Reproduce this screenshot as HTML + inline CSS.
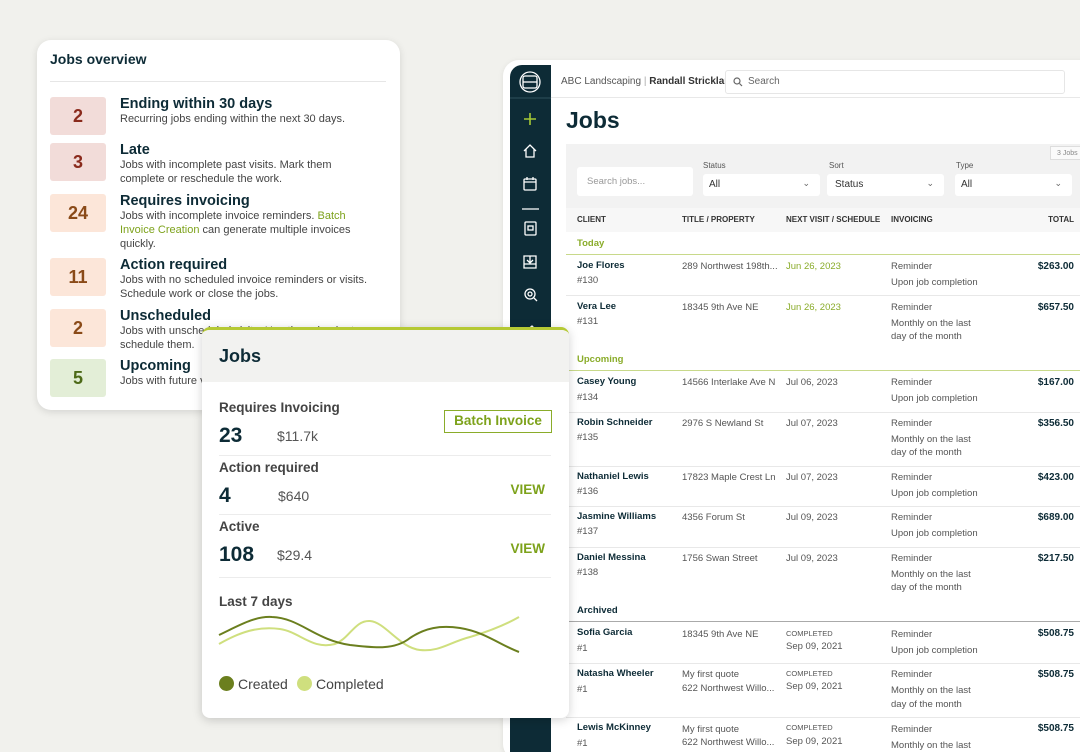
<!DOCTYPE html>
<html style="overflow:hidden;height:752px"><head><meta charset="utf-8"><style>
*{box-sizing:border-box;margin:0;padding:0}
html,body{overflow:hidden}
body{width:1080px;height:752px;background:#f1f1ed;font-family:"Liberation Sans",sans-serif;position:relative;overflow:hidden;color:#0d2b36}
.a{position:absolute;white-space:nowrap}
.card1{position:absolute;left:37px;top:40px;width:363px;height:370px;background:#fff;border-radius:14px;box-shadow:0 2px 8px rgba(0,0,0,.12)}
.badge{position:absolute;left:13px;width:56px;height:38px;border-radius:3px;font-weight:bold;font-size:18px;display:flex;align-items:center;justify-content:center}
.t1{position:absolute;left:83px;font-size:14.5px;font-weight:bold;color:#0d2b36}
.d1{position:absolute;left:83px;font-size:11px;line-height:14px;color:#444;width:258px}
.app{position:absolute;left:503px;top:60px;width:600px;height:700px;background:#fff;border-radius:16px;box-shadow:0 1px 6px rgba(0,0,0,.08)}
.side{position:absolute;left:510px;top:65px;width:41px;height:687px;background:#0d2b36;border-radius:12px 0 0 0}
.t{font-size:9.5px;color:#555}
.n{font-size:9.5px;font-weight:bold;color:#0d2b36}
.tot{position:absolute;right:6px;font-size:10px;font-weight:bold;color:#0d2b36}
.hl{position:absolute;left:566px;width:514px;height:1px;background:#e8e8e8}
.card2{position:absolute;left:202px;top:327px;width:367px;height:391px;background:#fff;border-radius:8px;box-shadow:0 2px 10px rgba(0,0,0,.18);overflow:hidden;border-top:3px solid #b5c934}
.lab{position:absolute;left:17px;font-size:13.5px;font-weight:bold;color:#444}
.big{position:absolute;left:17px;font-size:21px;font-weight:bold;color:#0d2b36}
.amt{position:absolute;font-size:14px;color:#555}
.view{position:absolute;right:24px;font-size:13.5px;font-weight:bold;color:#7da21b}
.sep{position:absolute;left:17px;width:332px;height:1px;background:#ececec}
</style></head><body>

<div class="card1">
  <div class="a" style="left:13px;top:11px;font-size:14px;font-weight:bold">Jobs overview</div>
  <div class="a" style="left:13px;top:41px;width:336px;height:1px;background:#e6e6e6"></div>
  <div class="badge" style="top:57px;background:#f2dcd9;color:#8a2a1c">2</div>
  <div class="t1" style="top:56px">Ending within 30 days</div>
  <div class="d1" style="top:72px;width:280px">Recurring jobs ending within the next 30 days.</div>
  <div class="badge" style="top:103px;background:#f2dcd9;color:#8a2a1c">3</div>
  <div class="t1" style="top:102px">Late</div>
  <div class="d1" style="top:118px;white-space:normal">Jobs with incomplete past visits. Mark them complete or reschedule the work.</div>
  <div class="badge" style="top:154px;background:#fce6d9;color:#8a4a18">24</div>
  <div class="t1" style="top:153px">Requires invoicing</div>
  <div class="d1" style="top:169px;white-space:normal;width:248px">Jobs with incomplete invoice reminders. <span style="color:#7da21b">Batch Invoice Creation</span> can generate multiple invoices quickly.</div>
  <div class="badge" style="top:218px;background:#fce6d9;color:#8a4a18">11</div>
  <div class="t1" style="top:217px">Action required</div>
  <div class="d1" style="top:233px;width:280px;white-space:normal">Jobs with no scheduled invoice reminders or visits. Schedule work or close the jobs.</div>
  <div class="badge" style="top:269px;background:#fce6d9;color:#8a4a18">2</div>
  <div class="t1" style="top:268px">Unscheduled</div>
  <div class="d1" style="top:284px;white-space:normal">Jobs with unscheduled visits. Use the calendar to schedule them.</div>
  <div class="badge" style="top:319px;background:#e3eed7;color:#4d6a18">5</div>
  <div class="t1" style="top:318px">Upcoming</div>
  <div class="d1" style="top:334px">Jobs with future visits.</div>
</div>

<div class="app"></div>
<div class="side">
  <svg width="41" height="290" viewBox="0 0 41 290" fill="none" stroke="#fff" stroke-width="1.3">
    <circle cx="20" cy="17" r="10"/><rect x="13" y="11" width="14" height="12" rx="2"/><line x1="13" y1="17" x2="27" y2="17"/>
    <line x1="0" y1="33" x2="41" y2="33" stroke="#2a4a55"/>
    <path d="M20 48v12M14 54h12" stroke="#a6c936" stroke-width="1.6"/>
    <path d="M14 86l6-6 6 6M16 84v8h8v-8"/>
    <rect x="14" y="114" width="12" height="11" rx="1"/><path d="M14 117h12M17 112v3M23 112v3"/>
    <line x1="12" y1="144" x2="29" y2="144" stroke="#fff"/>
    <rect x="15" y="157" width="11" height="13" rx="1"/><rect x="18" y="161" width="5" height="4"/>
    <path d="M14 191h12v12H14zM20 191v6M17 195l3 3 3-3M14 199h12"/>
    <circle cx="20" cy="229" r="5"/><circle cx="20" cy="229" r="2"/><path d="M24 233l3 3"/>
    <path d="M16 266l6-5 3 3-5 6z"/>
  </svg>
</div>
<div class="a" style="left:551px;top:97px;width:530px;height:1px;background:#e8e8e8"></div>
<div class="a" style="left:561px;top:76px;font-size:10px;color:#555">ABC Landscaping <span style="color:#aaa">|</span> <b style="color:#333">Randall Stricklan</b></div>
<div class="a" style="left:725px;top:70px;width:340px;height:24px;border:1px solid #e6e6e6;border-radius:3px;background:#fff"></div>
<svg class="a" style="left:733px;top:77px" width="10" height="10" viewBox="0 0 10 10" fill="none" stroke="#666" stroke-width="1.2"><circle cx="4" cy="4" r="3"/><path d="M6.5 6.5L9 9"/></svg>
<div class="a" style="left:748px;top:76px;font-size:10px;color:#666">Search</div>
<div class="a" style="left:566px;top:107px;font-size:23px;font-weight:900;color:#0d2b36">Jobs</div>

<div class="a" style="left:566px;top:144px;width:514px;height:64px;background:#f2f2f2"></div>
<div class="a" style="left:566px;top:208px;width:514px;height:24px;background:#f7f7f7"></div>
<div class="a" style="left:1050px;top:146px;width:32px;height:14px;border:1px solid #ddd;background:#fafafa;font-size:7px;color:#888;padding:3px 0 0 6px">3 Jobs</div>
<div class="a" style="left:577px;top:167px;width:116px;height:29px;background:#fff;border-radius:3px;font-size:9.5px;color:#999;padding:9px 10px">Search jobs...</div>
<div class="a" style="left:703px;top:161px;font-size:8px;color:#555">Status</div>
<div class="a" style="left:703px;top:174px;width:117px;height:22px;background:#fff;border-radius:3px;font-size:10px;color:#333;padding:5px 6px">All<span style="position:absolute;right:10px;top:4px;color:#666;font-size:9px">&#8964;</span></div>
<div class="a" style="left:829px;top:161px;font-size:8px;color:#555">Sort</div>
<div class="a" style="left:827px;top:174px;width:117px;height:22px;background:#fff;border-radius:3px;font-size:10px;color:#333;padding:5px 8px">Status<span style="position:absolute;right:10px;top:4px;color:#666;font-size:9px">&#8964;</span></div>
<div class="a" style="left:956px;top:161px;font-size:8px;color:#555">Type</div>
<div class="a" style="left:955px;top:174px;width:117px;height:22px;background:#fff;border-radius:3px;font-size:10px;color:#333;padding:5px 6px">All<span style="position:absolute;right:10px;top:4px;color:#666;font-size:9px">&#8964;</span></div>

<div class="a" style="left:577px;top:215px;font-size:8px;font-weight:bold;color:#333">CLIENT</div>
<div class="a" style="left:682px;top:215px;font-size:8px;font-weight:bold;color:#333">TITLE / PROPERTY</div>
<div class="a" style="left:786px;top:215px;font-size:8px;font-weight:bold;color:#333">NEXT VISIT / SCHEDULE</div>
<div class="a" style="left:891px;top:215px;font-size:8px;font-weight:bold;color:#333">INVOICING</div>
<div class="a" style="right:6px;top:215px;font-size:8px;font-weight:bold;color:#333">TOTAL</div>

<div class="a" style="left:577px;top:238px;font-size:9.5px;font-weight:bold;color:#8aac2a">Today</div>
<div class="hl" style="top:254px;background:#c8d98a"></div>
<div class="a n" style="left:577px;top:260px">Joe Flores</div><div class="a t" style="left:577px;top:275px">#130</div>
<div class="a t" style="left:682px;top:261px">289 Northwest 198th...</div>
<div class="a t" style="left:786px;top:261px;color:#8aac2a">Jun 26, 2023</div>
<div class="a t" style="left:891px;top:261px">Reminder</div><div class="a t" style="left:891px;top:277px">Upon job completion</div>
<div class="tot" style="top:261px">$263.00</div>
<div class="hl" style="top:295px"></div>
<div class="a n" style="left:577px;top:301px">Vera Lee</div><div class="a t" style="left:577px;top:316px">#131</div>
<div class="a t" style="left:682px;top:302px">18345 9th Ave NE</div>
<div class="a t" style="left:786px;top:302px;color:#8aac2a">Jun 26, 2023</div>
<div class="a t" style="left:891px;top:302px">Reminder</div><div class="a t" style="left:891px;top:318px">Monthly on the last</div><div class="a t" style="left:891px;top:331px">day of the month</div>
<div class="tot" style="top:302px">$657.50</div>

<div class="a" style="left:577px;top:354px;font-size:9.5px;font-weight:bold;color:#8aac2a">Upcoming</div>
<div class="hl" style="top:370px;background:#c8d98a"></div>
<div class="a n" style="left:577px;top:376px">Casey Young</div><div class="a t" style="left:577px;top:392px">#134</div>
<div class="a t" style="left:682px;top:377px">14566 Interlake Ave N</div>
<div class="a t" style="left:786px;top:377px">Jul 06, 2023</div>
<div class="a t" style="left:891px;top:377px">Reminder</div><div class="a t" style="left:891px;top:393px">Upon job completion</div>
<div class="tot" style="top:377px">$167.00</div>
<div class="hl" style="top:412px"></div>
<div class="a n" style="left:577px;top:417px">Robin Schneider</div><div class="a t" style="left:577px;top:432px">#135</div>
<div class="a t" style="left:682px;top:418px">2976 S Newland St</div>
<div class="a t" style="left:786px;top:418px">Jul 07, 2023</div>
<div class="a t" style="left:891px;top:418px">Reminder</div><div class="a t" style="left:891px;top:434px">Monthly on the last</div><div class="a t" style="left:891px;top:447px">day of the month</div>
<div class="tot" style="top:418px">$356.50</div>
<div class="hl" style="top:466px"></div>
<div class="a n" style="left:577px;top:471px">Nathaniel Lewis</div><div class="a t" style="left:577px;top:486px">#136</div>
<div class="a t" style="left:682px;top:472px">17823 Maple Crest Ln</div>
<div class="a t" style="left:786px;top:472px">Jul 07, 2023</div>
<div class="a t" style="left:891px;top:472px">Reminder</div><div class="a t" style="left:891px;top:488px">Upon job completion</div>
<div class="tot" style="top:472px">$423.00</div>
<div class="hl" style="top:506px"></div>
<div class="a n" style="left:577px;top:511px">Jasmine Williams</div><div class="a t" style="left:577px;top:526px">#137</div>
<div class="a t" style="left:682px;top:512px">4356 Forum St</div>
<div class="a t" style="left:786px;top:512px">Jul 09, 2023</div>
<div class="a t" style="left:891px;top:512px">Reminder</div><div class="a t" style="left:891px;top:528px">Upon job completion</div>
<div class="tot" style="top:512px">$689.00</div>
<div class="hl" style="top:547px"></div>
<div class="a n" style="left:577px;top:552px">Daniel Messina</div><div class="a t" style="left:577px;top:567px">#138</div>
<div class="a t" style="left:682px;top:553px">1756 Swan Street</div>
<div class="a t" style="left:786px;top:553px">Jul 09, 2023</div>
<div class="a t" style="left:891px;top:553px">Reminder</div><div class="a t" style="left:891px;top:569px">Monthly on the last</div><div class="a t" style="left:891px;top:582px">day of the month</div>
<div class="tot" style="top:553px">$217.50</div>

<div class="a" style="left:577px;top:605px;font-size:9.5px;font-weight:bold;color:#0d2b36">Archived</div>
<div class="hl" style="top:621px;background:#aaa"></div>
<div class="a n" style="left:577px;top:627px">Sofia Garcia</div><div class="a t" style="left:577px;top:643px">#1</div>
<div class="a t" style="left:682px;top:629px">18345 9th Ave NE</div>
<div class="a" style="left:786px;top:629px;font-size:7.5px;color:#555">COMPLETED</div><div class="a t" style="left:786px;top:641px">Sep 09, 2021</div>
<div class="a t" style="left:891px;top:629px">Reminder</div><div class="a t" style="left:891px;top:645px">Upon job completion</div>
<div class="tot" style="top:628px">$508.75</div>
<div class="hl" style="top:663px"></div>
<div class="a n" style="left:577px;top:668px">Natasha Wheeler</div><div class="a t" style="left:577px;top:684px">#1</div>
<div class="a t" style="left:682px;top:669px">My first quote</div><div class="a t" style="left:682px;top:683px">622 Northwest Willo...</div>
<div class="a" style="left:786px;top:669px;font-size:7.5px;color:#555">COMPLETED</div><div class="a t" style="left:786px;top:681px">Sep 09, 2021</div>
<div class="a t" style="left:891px;top:669px">Reminder</div><div class="a t" style="left:891px;top:685px">Monthly on the last</div><div class="a t" style="left:891px;top:699px">day of the month</div>
<div class="tot" style="top:669px">$508.75</div>
<div class="hl" style="top:717px"></div>
<div class="a n" style="left:577px;top:722px">Lewis McKinney</div><div class="a t" style="left:577px;top:738px">#1</div>
<div class="a t" style="left:682px;top:724px">My first quote</div><div class="a t" style="left:682px;top:737px">622 Northwest Willo...</div>
<div class="a" style="left:786px;top:723px;font-size:7.5px;color:#555">COMPLETED</div><div class="a t" style="left:786px;top:736px">Sep 09, 2021</div>
<div class="a t" style="left:891px;top:724px">Reminder</div><div class="a t" style="left:891px;top:740px">Monthly on the last</div>
<div class="tot" style="top:723px">$508.75</div>

<div class="card2">
  <div class="a" style="left:0;top:0;width:367px;height:52px;background:#f2f2f0"></div>
  <div class="a" style="left:17px;top:16px;font-size:18px;font-weight:900;color:#0d2b36">Jobs</div>
  <div class="lab" style="top:70px">Requires Invoicing</div>
  <div class="big" style="top:94px">23</div>
  <div class="amt" style="left:75px;top:98px">$11.7k</div>
  <div class="a" style="left:242px;top:80px;width:108px;height:23px;border:1.5px solid #8aac2a;font-size:13.5px;font-weight:bold;color:#7da21b;text-align:center;line-height:20px">Batch Invoice</div>
  <div class="sep" style="top:125px"></div>
  <div class="lab" style="top:130px">Action required</div>
  <div class="big" style="top:154px">4</div>
  <div class="amt" style="left:76px;top:158px">$640</div>
  <div class="view" style="top:152px">VIEW</div>
  <div class="sep" style="top:184px"></div>
  <div class="lab" style="top:189px">Active</div>
  <div class="big" style="top:213px">108</div>
  <div class="amt" style="left:75px;top:217px">$29.4</div>
  <div class="view" style="top:211px">VIEW</div>
  <div class="sep" style="top:247px"></div>
  <div class="lab" style="top:264px">Last 7 days</div>
  <svg class="a" style="left:0;top:0" width="367" height="391" viewBox="202 330 367 391" fill="none" stroke-width="2">
    <path d="M219 644 C240 632,258 626,280 629 C300 632,312 650,335 644 C350 638,355 620,370 621 C385 622,400 648,420 650 C440 652,450 642,470 637 C490 631,505 625,519 617" stroke="#cfdf7e"/>
    <path d="M219 635 C240 625,255 616,272 617 C300 618,315 640,350 645 C375 648,395 650,410 638 C425 628,440 625,460 628 C485 632,500 645,519 652" stroke="#6b7f1e"/>
  </svg>
  <div class="a" style="left:17px;top:346px;width:15px;height:15px;border-radius:50%;background:#6b7f1e"></div>
  <div class="a" style="left:36px;top:346px;font-size:14px;color:#444">Created</div>
  <div class="a" style="left:95px;top:346px;width:15px;height:15px;border-radius:50%;background:#cfdf7e"></div>
  <div class="a" style="left:114px;top:346px;font-size:14px;color:#444">Completed</div>
</div>
</body></html>
